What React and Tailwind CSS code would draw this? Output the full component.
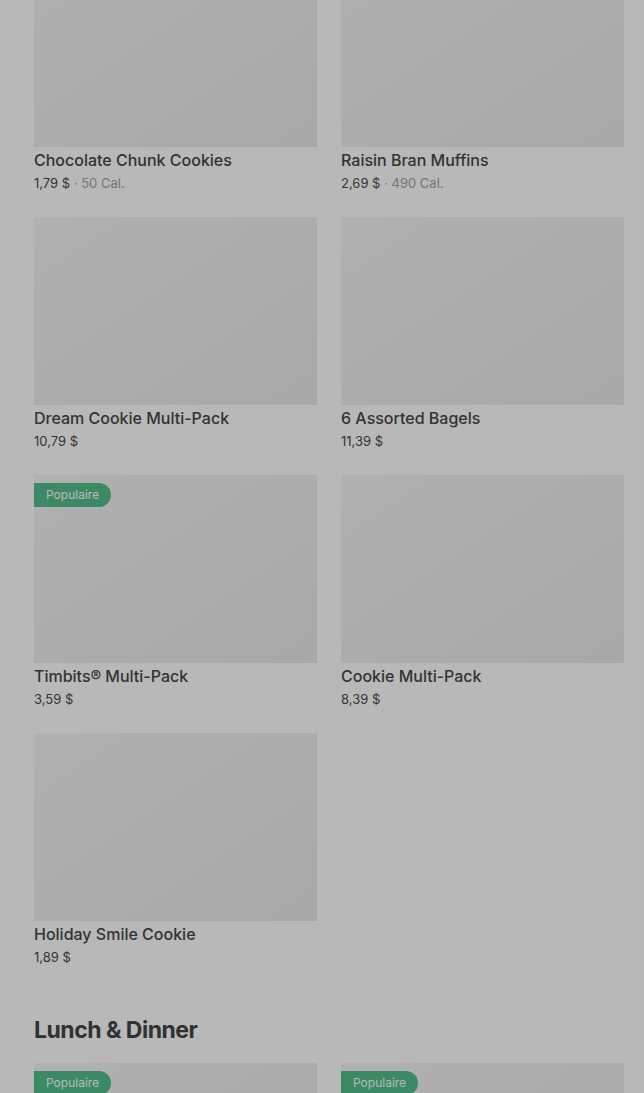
const items = [
  { name: 'Chocolate Chunk Cookies', price: '1,79 $', cal: '50 Cal.' },
  { name: 'Raisin Bran Muffins', price: '2,69 $', cal: '490 Cal.' },
  { name: 'Dream Cookie Multi-Pack', price: '10,79 $' },
  { name: '6 Assorted Bagels', price: '11,39 $' },
  { name: 'Timbits® Multi-Pack', price: '3,59 $', popular: true },
  { name: 'Cookie Multi-Pack', price: '8,39 $' },
  { name: 'Holiday Smile Cookie', price: '1,89 $' },
]

function Badge() {
  return (
    <span className="absolute left-0 top-2 h-6 flex items-center pl-3 pr-3 rounded-r-full bg-[#52c08c] text-white text-[12px]">
      Populaire
    </span>
  )
}

function ItemCard({ item }) {
  return (
    <div>
      <div className="relative h-[188px] bg-gradient-to-br from-[#f5f5f5] to-[#e9e9e9]">
        {item.popular && <Badge />}
      </div>
      <div className="mt-[1px] text-[16px] leading-6 font-medium text-[#474747]">{item.name}</div>
      <div className="text-[13px] leading-[22px] text-[#4a4a4a]">
        {item.price}
        {item.cal && <span className="text-[#a3a3a3]"> · {item.cal}</span>}
      </div>
    </div>
  )
}

export default function App() {
  return (
    <div className="relative h-[1093px] overflow-hidden bg-white" style={{ fontFamily: 'Inter, "Noto Sans", sans-serif' }}>
      <div className="pl-[34px] pr-[20px] -mt-[41px]">
        <div className="grid grid-cols-2 gap-x-6 gap-y-[23px]">
          {items.map((item, i) => (
            <ItemCard key={i} item={item} />
          ))}
        </div>

        <h2 className="mt-[46px] text-[23px] leading-8 font-bold text-[#444] tracking-[-0.5px]">Lunch &amp; Dinner</h2>

        <div className="mt-[17px] grid grid-cols-2 gap-x-6">
          {[0, 1].map(i => (
            <div key={i} className="relative h-[188px] bg-gradient-to-br from-[#f5f5f5] to-[#e9e9e9]">
              <Badge />
            </div>
          ))}
        </div>
      </div>

      {/* modal backdrop */}
      <div className="absolute inset-0 bg-black/[0.28]" />
    </div>
  )
}
